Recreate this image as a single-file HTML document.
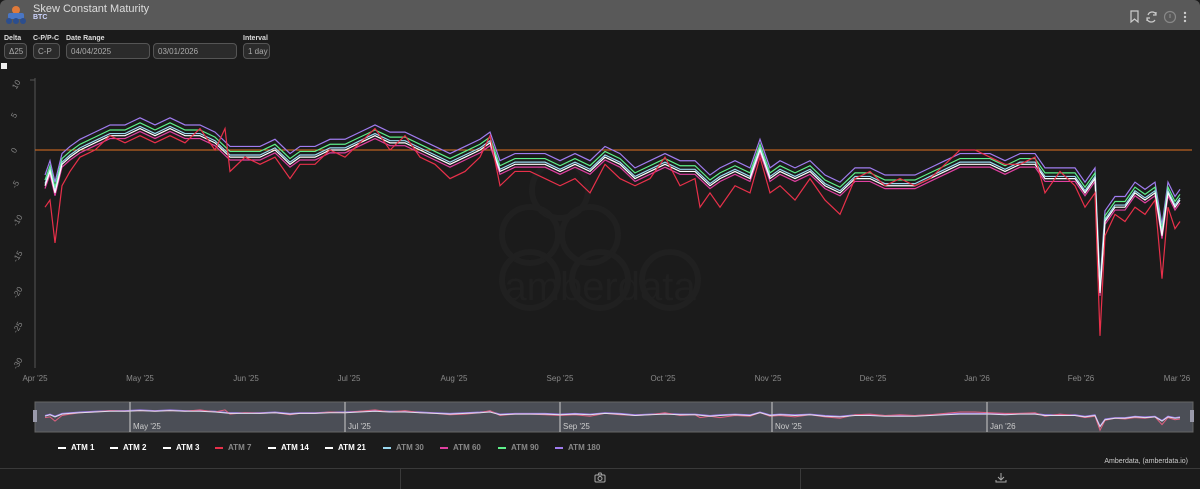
<!DOCTYPE html>
<html><head><style>
body{margin:0;width:1200px;height:489px;background:#1b1b1b;font-family:"Liberation Sans",sans-serif;overflow:hidden;position:relative;color:#ccc}
.hdr{position:absolute;left:0;top:0;width:1200px;height:30px;background:#595959;border-radius:6px 6px 0 0}
.t1{position:absolute;left:33px;top:3px;font-size:11px;color:#ddd}
.t2{position:absolute;left:33px;top:14px;font-size:7px;color:#cfd6ff;font-weight:bold}
.lab{position:absolute;top:35px;font-size:7px;font-weight:bold;color:#ddd}
.box{position:absolute;top:43px;height:16px;border:1px solid #555;background:#2b2b2b;border-radius:4px;font-size:8px;color:#aaa;line-height:16px;padding-left:4px;box-sizing:border-box}
.yl{position:absolute;font-size:8px;color:#888;transform:rotate(-60deg);left:12px}
.leg{position:absolute;top:443px;font-size:8px;font-weight:bold;color:#fff}
.leg span{display:inline-block;width:8px;height:2px;vertical-align:middle;margin-right:5px}
</style></head><body>
<div class="hdr"></div>
<svg style="position:absolute;left:4px;top:4px" width="24" height="22"><circle cx="12" cy="6" r="4" fill="#e07a3a"/><rect x="4" y="9" width="16" height="6" rx="2" fill="#4a76c4"/><circle cx="5" cy="17" r="3" fill="#2c4e8e"/><circle cx="12" cy="17" r="3" fill="#2c4e8e"/><circle cx="19" cy="17" r="3" fill="#2c4e8e"/></svg>
<div class="t1">Skew Constant Maturity</div><div class="t2">BTC</div>
<svg style="position:absolute;left:1128px;top:10px" width="70" height="14" fill="none" stroke="#ccc" stroke-width="1.2"><path d="M3 1h7v11l-3.5-3l-3.5 3z"/><path d="M28 4a4.5 4.5 0 0 0-8 1M19 9a4.5 4.5 0 0 0 8 1M28 2v3h-3M19 11v-3h3"/><circle cx="42" cy="7" r="5.5" stroke="#888"/><path d="M42 4v4" stroke="#888"/><circle cx="57" cy="3" r=".6" fill="#ccc"/><circle cx="57" cy="7" r=".6" fill="#ccc"/><circle cx="57" cy="11" r=".6" fill="#ccc"/></svg>
<div class="lab" style="left:4px">Delta</div><div class="lab" style="left:33px">C-P/P-C</div><div class="lab" style="left:66px">Date Range</div><div class="lab" style="left:243px">Interval</div>
<div class="box" style="left:4px;width:23px">Δ25</div>
<div class="box" style="left:33px;width:27px">C-P</div>
<div class="box" style="left:66px;width:84px">04/04/2025</div>
<div class="box" style="left:153px;width:84px">03/01/2026</div>
<div class="box" style="left:243px;width:27px">1 day</div>
<div style="position:absolute;left:1px;top:63px;width:6px;height:6px;background:#eee"></div>
<div class="yl" style="top:80px">10</div><div class="yl" style="top:111px">5</div><div class="yl" style="top:146px">0</div><div class="yl" style="top:180px">-5</div><div class="yl" style="top:216px">-10</div><div class="yl" style="top:252px">-15</div><div class="yl" style="top:288px">-20</div><div class="yl" style="top:323px">-25</div><div class="yl" style="top:359px">-30</div>
<svg style="position:absolute;left:0;top:0" width="1200" height="400">
<line x1="35" y1="78" x2="35" y2="368" stroke="#555"/>
<line x1="30" y1="80" x2="35" y2="80" stroke="#555"/>
<text x="600" y="300" font-size="40" fill="#202020" text-anchor="middle" font-family="Liberation Sans">amberdata</text>
<g fill="none" stroke="#202020" stroke-width="6"><circle cx="560" cy="190" r="28"/><circle cx="530" cy="235" r="28"/><circle cx="590" cy="235" r="28"/><circle cx="530" cy="280" r="28"/><circle cx="600" cy="280" r="28"/><circle cx="670" cy="280" r="28"/></g>
<line x1="35" y1="150" x2="1192" y2="150" stroke="#e07020" stroke-width="1"/>
<defs><polyline id="w" vector-effect="non-scaling-stroke" points="45,-5 50,-3 55,-6 62,-2 70,-1 80,0 95,1 110,2 125,2 140,3 155,2 170,3 185,2 200,2 215,1 230,-1 245,-1 260,-1 275,0 290,-2 300,-1 315,-1 330,0 345,0 360,1 375,2 390,1 405,1 420,0 435,-1 450,-2 465,-1 480,0 490,1 500,-3 515,-2 530,-2 545,-2 560,-3 575,-2 590,-3 605,-1 620,-2 635,-4 650,-3 665,-2 680,-3 695,-3 710,-5 720,-4 735,-3 750,-4 760,0 770,-4 780,-3 795,-4 810,-3 825,-5 840,-6 855,-4 870,-4 885,-5 900,-5 915,-5 930,-4 945,-3 960,-2 975,-2 990,-2 1005,-3 1020,-2 1035,-2 1045,-4 1060,-4 1075,-4 1085,-6 1095,-4 1100,-20 1105,-10 1115,-8 1125,-8 1135,-6 1145,-7 1155,-6 1162,-12 1168,-6 1175,-8 1180,-7"/>
<polyline id="r" vector-effect="non-scaling-stroke" points="45,-8 50,-7 55,-13 62,-5 70,-3 80,-1 95,0 110,2 125,1 140,2 155,1 170,2 185,1 200,3 215,0 225,3 230,-3 245,-1 260,-2 275,-1 290,-4 300,-2 315,-2 330,0 345,-1 360,1 375,3 390,0 405,2 420,-1 435,-2 450,-4 465,-3 480,-1 490,2 500,-5 515,-3 530,-3 545,-4 560,-5 575,-4 590,-6 605,-2 620,-4 635,-5 650,-4 665,-1 680,-5 695,-4 700,-8 710,-6 720,-8 735,-5 750,-6 760,-1 770,-6 780,-5 795,-7 810,-4 825,-7 840,-9 855,-4 870,-3 885,-5 900,-4 915,-5 930,-4 945,-2 960,0 975,0 990,-1 1005,-2 1020,-2 1035,-1 1045,-6 1060,-3 1075,-5 1085,-8 1095,-6 1100,-26 1105,-12 1115,-9 1125,-10 1135,-8 1145,-9 1155,-7 1162,-18 1168,-8 1175,-11 1180,-10"/></defs>
<g transform="translate(0,150) scale(1,-7.15)" fill="none" stroke-width="1.2">
<use href="#w" stroke="#a07cf0" transform="translate(0,1.5)"/>
<use href="#w" stroke="#5ef08a" transform="translate(0,0.8)"/>
<use href="#w" stroke="#e040a0" transform="translate(0,-0.4)"/>
<use href="#w" stroke="#9ad8f0" transform="translate(0,0.3)"/>
<use href="#w" stroke="#ffffff"/>
<use href="#r" stroke="#e8304a"/>
</g>
<g font-size="8" fill="#888" font-family="Liberation Sans" text-anchor="middle"><text x="35" y="381">Apr '25</text><text x="140" y="381">May '25</text><text x="246" y="381">Jun '25</text><text x="349" y="381">Jul '25</text><text x="454" y="381">Aug '25</text><text x="560" y="381">Sep '25</text><text x="663" y="381">Oct '25</text><text x="768" y="381">Nov '25</text><text x="873" y="381">Dec '25</text><text x="977" y="381">Jan '26</text><text x="1081" y="381">Feb '26</text><text x="1177" y="381">Mar '26</text></g>
</svg>
<svg style="position:absolute;left:0;top:400px" width="1200" height="36">
<rect x="35" y="2" width="1158" height="30" fill="#4b4e56" stroke="#666"/>
<g transform="translate(0,12) scale(1,-0.7)" fill="none" stroke-width="1"><use href="#w" stroke="#a07cf0"/><use href="#r" stroke="#e06080"/><use href="#w" stroke="#dde" transform="translate(0,-1)"/></g>
<g stroke="#ccc"><line x1="130" y1="2" x2="130" y2="32"/><line x1="345" y1="2" x2="345" y2="32"/><line x1="560" y1="2" x2="560" y2="32"/><line x1="772" y1="2" x2="772" y2="32"/><line x1="987" y1="2" x2="987" y2="32"/></g>
<rect x="33" y="10" width="4" height="12" fill="#99a"/><rect x="1190" y="10" width="4" height="12" fill="#99a"/>
<g font-size="8" fill="#ccc" font-family="Liberation Sans"><text x="133" y="29">May '25</text><text x="348" y="29">Jul '25</text><text x="563" y="29">Sep '25</text><text x="775" y="29">Nov '25</text><text x="990" y="29">Jan '26</text></g>
</svg>
<div class="leg" style="left:58px"><span style="background:#fff"></span>ATM 1</div>
<div class="leg" style="left:110px"><span style="background:#fff"></span>ATM 2</div>
<div class="leg" style="left:163px"><span style="background:#fff"></span>ATM 3</div>
<div class="leg" style="left:215px;color:#888"><span style="background:#e8304a"></span>ATM 7</div>
<div class="leg" style="left:268px"><span style="background:#fff"></span>ATM 14</div>
<div class="leg" style="left:325px"><span style="background:#fff"></span>ATM 21</div>
<div class="leg" style="left:383px;color:#888"><span style="background:#9ad8f0"></span>ATM 30</div>
<div class="leg" style="left:440px;color:#888"><span style="background:#e040a0"></span>ATM 60</div>
<div class="leg" style="left:498px;color:#888"><span style="background:#5ef08a"></span>ATM 90</div>
<div class="leg" style="left:555px;color:#888"><span style="background:#a07cf0"></span>ATM 180</div>
<div style="position:absolute;right:12px;top:458px;font-size:7px;color:#ccc">Amberdata, (amberdata.io)</div>
<div style="position:absolute;left:0;top:468px;width:1200px;height:1px;background:#3a3a3a"></div>
<div style="position:absolute;left:400px;top:468px;width:1px;height:21px;background:#3a3a3a"></div>
<div style="position:absolute;left:800px;top:468px;width:1px;height:21px;background:#3a3a3a"></div>
<svg style="position:absolute;left:594px;top:472px" width="12" height="11" fill="none" stroke="#aaa"><rect x="1" y="3" width="10" height="7" rx="1"/><circle cx="6" cy="6.5" r="2"/><path d="M4 3l1-2h2l1 2"/></svg>
<svg style="position:absolute;left:995px;top:472px" width="12" height="11" fill="none" stroke="#aaa"><path d="M6 1v6M3 5l3 3l3-3M1 8v2h10v-2"/></svg>
</body></html>
